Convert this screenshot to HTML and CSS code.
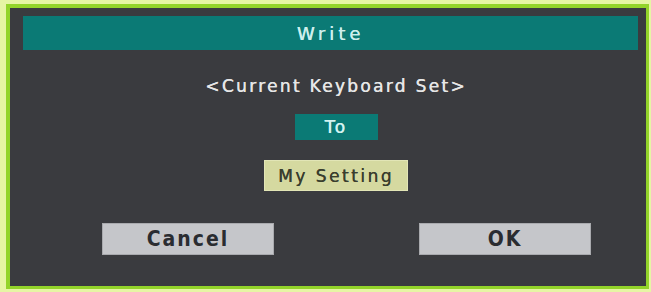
FILE: index.html
```html
<!DOCTYPE html>
<html>
<head>
<meta charset="utf-8">
<link rel="stylesheet" href="styles.css">
</head>
<body>
<div class="frame">
  <div class="panel">
    <div class="header">Write</div>
    <div class="content">
      <div class="subject">&lt;Current Keyboard Set&gt;</div>
      <div class="to">To</div>
      <div class="target">My Setting</div>
    </div>
    <div class="actions">
      <div class="btn">Cancel</div>
      <div class="btn">OK</div>
    </div>
  </div>
</div>
</body>
</html>
```

FILE: styles.css
```css
html, body {
  margin: 0;
  padding: 0;
}
body {
  width: 651px;
  height: 292px;
  background: #e6f5a4;
  font-family: "DejaVu Sans", "Liberation Sans", sans-serif;
  overflow: hidden;
}
.frame {
  margin: 4px 2px 3px 6px;
  border-style: solid;
  border-color: #93d42a;
  border-width: 4px 3px 3px 4px;
  height: 278px;
}
.panel {
  height: 278px;
  background: #3a3b3f;
  display: flex;
  flex-direction: column;
}
.header {
  margin: 8px 8px 0 13px;
  height: 34px;
  background: #0b7a75;
  color: #cdefed;
  font-size: 18px;
  letter-spacing: 4px;
  text-shadow: 0.4px 0 0 #cdefed;
  display: flex;
  align-items: center;
  justify-content: center;
}
.content {
  display: flex;
  flex-direction: column;
  align-items: center;
  padding-left: 16px;
}
.subject {
  margin-top: 26px;
  height: 20px;
  line-height: 20px;
  color: #e6e6e6;
  font-size: 17px;
  letter-spacing: 2.3px;
  text-shadow: 0.4px 0 0 #e6e6e6;
}
.to {
  margin-top: 18px;
  width: 83px;
  height: 26px;
  background: #0b7a75;
  color: #d2f3f0;
  font-size: 17px;
  letter-spacing: 2.5px;
  text-shadow: 0.4px 0 0 #d2f3f0;
  display: flex;
  align-items: center;
  justify-content: center;
}
.target {
  margin-top: 20px;
  width: 144px;
  height: 31px;
  box-sizing: border-box;
  border: 1px solid #e2e5b6;
  background: #d5d9a0;
  color: #3a3e2e;
  font-size: 17px;
  letter-spacing: 2.5px;
  text-shadow: 0.4px 0 0 #3a3e2e;
  display: flex;
  align-items: center;
  justify-content: center;
}
.actions {
  margin-top: 32px;
  padding-left: 92px;
  display: flex;
  gap: 145px;
}
.btn {
  width: 172px;
  height: 32px;
  box-sizing: border-box;
  border: 1px solid #a9aaae;
  background: #c5c6ca;
  color: #2a2c31;
  font-family: "DejaVu Sans Condensed", "DejaVu Sans", sans-serif;
  font-stretch: condensed;
  font-weight: bold;
  font-size: 21px;
  letter-spacing: 2px;
  display: flex;
  align-items: center;
  justify-content: center;
}
```
